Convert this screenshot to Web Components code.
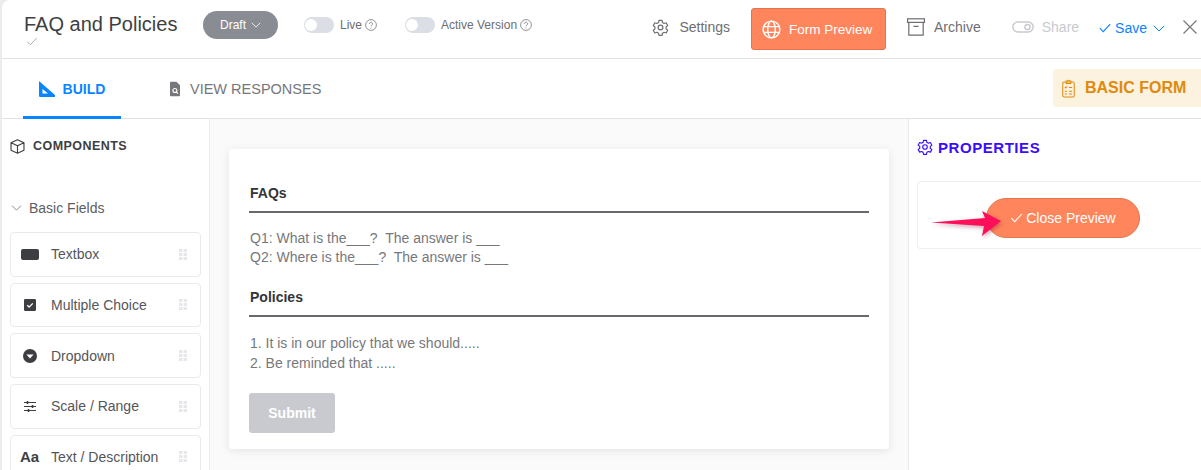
<!DOCTYPE html>
<html><head><meta charset="utf-8"><title>FAQ and Policies</title>
<style>
html,body{margin:0;padding:0;width:1201px;height:470px;overflow:hidden;background:#ececef;font-family:"Liberation Sans",Arial,sans-serif}
</style></head><body>
<form-app></form-app>
<script>
const ICONS={
 check:'<svg width="100%" height="100%" viewBox="0 0 12 10" fill="none" stroke="currentColor" stroke-width="1.1"><path d="M.8 5.2 4.2 8.6 11.2 1.2"/></svg>',
 chev:'<svg width="100%" height="100%" viewBox="0 0 12 7" fill="none" stroke="currentColor" stroke-width="1"><path d="M.8.8 6 6 11.2.8"/></svg>',
 help:'<svg width="100%" height="100%" viewBox="0 0 12 12" fill="none" stroke="currentColor" stroke-width=".8"><circle cx="6" cy="6" r="5.4"/><path d="M4.4 4.8a1.6 1.6 0 1 1 2.4 1.4c-.6.3-.8.6-.8 1.2"/><circle cx="6" cy="9" r=".5" fill="currentColor" stroke="none"/></svg>',
 gear:'<svg width="100%" height="100%" viewBox="0 0 24 24" fill="none" stroke="currentColor" stroke-width="1.7" stroke-linejoin="round"><circle cx="12" cy="12" r="3.4"/><path d="M9.8 2h4.4l.6 3 2.3 1.3 2.9-1 2.2 3.8-2.3 2v2.8l2.3 2-2.2 3.8-2.9-1-2.3 1.3-.6 3H9.8l-.6-3-2.3-1.3-2.9 1-2.2-3.8 2.3-2v-2.8l-2.3-2 2.2-3.8 2.9 1 2.3-1.3z"/></svg>',
 globe:'<svg width="100%" height="100%" viewBox="0 0 20 20" fill="none" stroke="currentColor" stroke-width="1.5"><circle cx="10" cy="10" r="8.8"/><ellipse cx="10" cy="10" rx="4" ry="8.8"/><path d="M1.6 7h16.8M1.6 13h16.8"/></svg>',
 archive:'<svg width="100%" height="100%" viewBox="0 0 18 18" fill="none" stroke="currentColor" stroke-width="1.2"><rect x=".6" y=".8" width="16.8" height="3.6"/><path d="M1.8 4.4V17.2H16.2V4.4M6.5 8.4h5"/></svg>',
 share:'<svg width="100%" height="100%" viewBox="0 0 22 12" fill="none" stroke="currentColor" stroke-width="1.5"><rect x=".8" y="1" width="20.4" height="10" rx="5"/><circle cx="15.5" cy="6" r="2.6"/></svg>',
 build:'<svg width="100%" height="100%" viewBox="0 0 16 16"><path fill="currentColor" fill-rule="evenodd" d="M0 0 16 14v2H1.2A1.2 1.2 0 0 1 0 14.8zM3.5 8v4.6H9z"/></svg>',
 doc:'<svg width="100%" height="100%" viewBox="0 0 11 16"><path fill="currentColor" d="M1 0h6l4 4v11a1 1 0 0 1-1 1H1a1 1 0 0 1-1-1V1a1 1 0 0 1 1-1z"/><circle cx="5.4" cy="9.6" r="2.2" fill="none" stroke="#fff" stroke-width="1.2"/><path d="M7 11.3l1.8 1.8" stroke="#fff" stroke-width="1.2"/></svg>',
 clip:'<svg width="100%" height="100%" viewBox="0 0 14 20" fill="none" stroke="currentColor" stroke-width="1.1"><rect x=".8" y="3" width="12.4" height="16.2" rx="1.6"/><path d="M4.5 3V1.8h1.4a1.2 1.2 0 0 1 2.2 0h1.4V4.6h-5zM3 8.4l1 1 1.6-1.8M7.4 9h3.6M3 13h2.4M7.4 13h3.6M3 16h2.4M7.4 16h3.6"/></svg>',
 cube:'<svg width="100%" height="100%" viewBox="0 0 16 16" fill="none" stroke="currentColor" stroke-width="1.2" stroke-linejoin="round"><path d="M8 .9 14.9 4v8L8 15.1 1.1 12V4zM1.1 4 8 7.2 14.9 4M8 7.2v7.9"/></svg>',
 textbox:'<svg width="100%" height="100%" viewBox="0 0 18 11"><rect width="18" height="11" rx="2" fill="currentColor"/></svg>',
 mc:'<svg width="100%" height="100%" viewBox="0 0 12 12"><rect width="12" height="12" rx="1.2" fill="currentColor"/><path d="M3.2 6.2 5.2 8 8.8 4.4" fill="none" stroke="#fff" stroke-width="1.3"/></svg>',
 dd:'<svg width="100%" height="100%" viewBox="0 0 14 14"><circle cx="7" cy="7" r="7" fill="currentColor"/><path d="M3.4 5.4h7.2L7 9.6z" fill="#fff"/></svg>',
 scale:'<svg width="100%" height="100%" viewBox="0 0 12 11" fill="none" stroke="currentColor" stroke-width="1.2"><path d="M0 1.5h12M0 5.5h12M0 9.5h12"/><path d="M3.5 0v3M8.5 4v3M4.5 8v3" stroke-width="1.6"/></svg>',
 drag:'<svg width="100%" height="100%" viewBox="0 0 8 11" fill="#e6e7ea"><rect width="3.4" height="3"/><rect x="4.6" width="3.4" height="3"/><rect y="4" width="3.4" height="3"/><rect x="4.6" y="4" width="3.4" height="3"/><rect y="8" width="3.4" height="3"/><rect x="4.6" y="8" width="3.4" height="3"/></svg>',
 x:'<svg width="100%" height="100%" viewBox="0 0 14 14" fill="none" stroke="currentColor" stroke-width="1.2"><path d="M.5.5l13 13M13.5.5l-13 13"/></svg>'
};
class Base extends HTMLElement{
 render(html){if(!this.shadowRoot)this.attachShadow({mode:'open'});this.shadowRoot.innerHTML=html}
}
class UiIcon extends Base{
 connectedCallback(){
  const w=this.getAttribute('w')||16,h=this.getAttribute('h')||w;
  this.render(`<style>:host{display:inline-block;width:${w}px;height:${h}px;flex:none;line-height:0}</style>${ICONS[this.getAttribute('name')]||''}`);
 }
}
customElements.define('ui-icon',UiIcon);
class UiToggle extends Base{
 connectedCallback(){
  this.render(`<style>
  :host{display:inline-flex;align-items:center;font-size:12px;color:#6d6e72}
  i{display:block;width:30px;height:16px;border-radius:8px;background:#dcdee5;position:relative;margin-right:6px}
  i::after{content:"";position:absolute;left:1px;top:2px;width:12px;height:12px;border-radius:50%;background:#fff}
  ui-icon{margin-left:3px;color:#77787c}
  </style><i></i><slot></slot><ui-icon name="help" w="12"></ui-icon>`);
 }
}
customElements.define('ui-toggle',UiToggle);
class AppHeader extends Base{
 connectedCallback(){
  this.render(`<style>
  :host{display:flex;align-items:flex-start;height:58px;border-bottom:1px solid #e2e3e8;box-sizing:content-box;position:relative}
  .title{width:178px;padding:13px 0 0 22px;flex:none;color:#3e3f42;font-size:20px;line-height:23px}
  .title ui-icon{display:block;color:#a9aaae;margin:1px 0 0 2px}
  .pill{flex:none;width:75px;height:28px;margin:11px 26px 0 1px;border-radius:14px;background:#8a8c93;color:#fff;font-size:12px;display:flex;align-items:center;justify-content:center;gap:5px}
  .tg{display:flex;margin-top:17px;gap:28px;height:16px;flex:none}
  .acts{margin-left:auto;display:flex;align-items:flex-start;flex:none}
  .a{display:flex;align-items:center;font-size:14px;color:#6d6e72;height:42px;margin-top:6px}
  .btn{width:135px;height:42px;margin:8px 21px 0 21px;box-sizing:border-box;background:#ff855c;border:1px solid #e2744f;border-radius:3px;color:#fff;font-size:13.5px;display:flex;align-items:center;padding-left:10px;gap:8px}
  </style>
  <div class="title">FAQ and Policies<ui-icon name="check" w="12" h="9"></ui-icon></div>
  <div class="pill">Draft <ui-icon name="chev" w="10" h="6"></ui-icon></div>
  <div class="tg"><ui-toggle>Live</ui-toggle><ui-toggle>Active Version</ui-toggle></div>
  <div class="acts">
   <div class="a" style="gap:10px"><ui-icon name="gear" w="17"></ui-icon>Settings</div>
   <div class="btn"><ui-icon name="globe" w="19"></ui-icon>Form Preview</div>
   <div class="a" style="gap:9px"><ui-icon name="archive" w="18"></ui-icon>Archive</div>
   <div class="a" style="gap:8px;margin-left:31px;color:#c8cad0"><ui-icon name="share" w="22" h="12"></ui-icon>Share</div>
   <div class="a" style="margin-left:20px;color:#0a84ff;margin-top:7px"><ui-icon name="check" w="12" h="10"></ui-icon><span style="margin:0 6px 0 4px">Save</span><ui-icon name="chev" w="12" h="7"></ui-icon></div>
   <div class="a" style="margin:6px 4px 0 18px;color:#77787c"><ui-icon name="x" w="14"></ui-icon></div>
  </div>`);
 }
}
customElements.define('app-header',AppHeader);
class AppTabs extends Base{
 connectedCallback(){
  this.render(`<style>
  :host{display:flex;height:59px;border-bottom:1px solid #e2e3e8;position:relative;font-size:14px}
  .t{display:flex;align-items:center;height:59px;box-sizing:border-box;flex:none}
  .on{margin-left:21px;width:98px;justify-content:center;gap:8px;color:#0a84ff;font-weight:bold;border-bottom:3px solid #0a84ff;padding-top:3px;height:60px}
  .off{margin-left:49px;gap:10px;color:#76777b;font-size:14.5px}
  .badge{margin:10px 0 0 auto;width:148px;height:38px;background:#fbf3e0;border-radius:3px 0 0 3px;display:flex;align-items:center;gap:10px;padding-left:9px;box-sizing:border-box;color:#e08a0c;font-weight:bold;font-size:16px}
  </style>
  <div class="t on"><ui-icon name="build" w="16"></ui-icon>BUILD</div>
  <div class="t off"><ui-icon name="doc" w="10" h="16"></ui-icon>VIEW RESPONSES</div>
  <div class="badge"><ui-icon name="clip" w="13" h="19"></ui-icon>BASIC FORM</div>`);
 }
}
customElements.define('app-tabs',AppTabs);
class FieldCard extends Base{
 connectedCallback(){
  const n=this.getAttribute('icon'),w=this.getAttribute('w'),h=this.getAttribute('h');
  const ic=n==='aa'?`<span class="aa">Aa</span>`:`<ui-icon name="${n}" w="${w}" h="${h}"></ui-icon>`;
  this.render(`<style>
  :host{display:flex;align-items:center;height:44.67px;flex:none;box-sizing:border-box;border:1px solid #e9eaee;border-radius:4px;color:#55565a;font-size:14px}
  .i{width:39px;margin-left:1px;display:flex;justify-content:center;flex:none;color:#3d3e42;box-sizing:border-box;padding-right:4px;margin-right:0}
  .aa{font-size:15px;font-weight:bold;color:#3d3e42;line-height:15px}
  .l{flex:1}
  ui-icon.d{margin-right:13px}
  </style><span class="i">${ic}</span><span class="l"><slot></slot></span><ui-icon class="d" name="drag" w="8" h="11"></ui-icon>`);
 }
}
customElements.define('field-card',FieldCard);
class LeftPane extends Base{
 connectedCallback(){
  this.render(`<style>
  :host{display:flex;flex-direction:column;width:207px;flex:none;box-sizing:content-box;border-right:1px solid #e9eaee;background:#fff;padding:0 8px 0 8px;width:191px;margin-left:0;overflow:hidden}
  .h{display:flex;align-items:center;gap:8px;height:14px;margin-top:20px;font-weight:bold;font-size:12.5px;letter-spacing:.45px;color:#3d3e42}
  .s{display:flex;align-items:center;gap:7px;margin:47px 0 16px 1px;font-size:14px;color:#5d5e62;height:16px;line-height:16px}
  .s ui-icon{color:#77787c}
  .list{display:flex;flex-direction:column;gap:6px}
  </style>
  <div class="h"><ui-icon name="cube" w="15" style="color:#3d3e42"></ui-icon>COMPONENTS</div>
  <div class="s"><ui-icon name="chev" w="11" h="6"></ui-icon>Basic Fields</div>
  <div class="list">
   <field-card icon="textbox" w="18" h="11">Textbox</field-card>
   <field-card icon="mc" w="12" h="12">Multiple Choice</field-card>
   <field-card icon="dd" w="14" h="14">Dropdown</field-card>
   <field-card icon="scale" w="12" h="11">Scale / Range</field-card>
   <field-card icon="aa">Text / Description</field-card>
  </div>`);
 }
}
customElements.define('left-pane',LeftPane);
class FormCard extends Base{
 connectedCallback(){
  this.render(`<style>
  :host{display:block;width:660px;height:300px;margin:30px 0 0 19px;background:#fff;border-radius:3px;box-shadow:0 2px 10px rgba(0,0,0,.09);box-sizing:border-box;padding:36px 20px 0 21px;color:#77787c;font-size:14px}
  h4{margin:0;font-size:14px;line-height:16px;font-weight:bold;color:#333438}
  hr{margin:10px 0 0 -1px;height:2px;border:0;background:#68696c}
  p{margin:0}
  .q{margin-top:16px;line-height:19px}
  .p{margin-top:16px;line-height:20px}
  h4.b{margin-top:22px}
  .sub{margin:20px 0 0 -1px;width:86px;height:40px;border-radius:3px;background:#c8cad0;color:#fff;font-size:14px;font-weight:bold;display:flex;align-items:center;justify-content:center}
  </style>
  <h4>FAQs</h4><hr>
  <p class="q" style="white-space:pre">Q1: What is the___?  The answer is ___
Q2: Where is the___?  The answer is ___</p>
  <h4 class="b">Policies</h4><hr>
  <p class="p" style="white-space:pre">1. It is in our policy that we should.....
2. Be reminded that .....</p>
  <div class="sub">Submit</div>`);
 }
}
customElements.define('form-card',FormCard);
class RightPane extends Base{
 connectedCallback(){
  this.render(`<style>
  :host{display:block;flex:1;border-left:1px solid #e9eaee;background:#fff;padding:19px 0 0 8px;min-width:0}
  .h{display:flex;align-items:center;gap:5px;height:18px;color:#3a0cff;font-weight:bold;font-size:15px;letter-spacing:.55px}
  .c{margin-top:25px;height:68px;box-sizing:border-box;border:1px solid #eeeff2;border-right:0;border-radius:4px 0 0 4px;padding:16px 0 0 68px;position:relative}
  .b{width:154px;height:40px;box-sizing:border-box;border-radius:20px;background:#ff855c;border:1px solid #e2744f;color:#fff;font-size:14px;display:flex;align-items:center;justify-content:center;gap:3px}
  svg.arrow{position:absolute;left:13px;top:28px;overflow:visible;filter:drop-shadow(1px 2px 2px rgba(120,0,40,.35))}
  </style>
  <div class="h"><ui-icon name="gear" w="16"></ui-icon>PROPERTIES</div>
  <div class="c"><div class="b"><ui-icon name="check" w="13" h="10"></ui-icon>Close Preview</div>
  <svg class="arrow" width="70" height="26" viewBox="0 0 70 26"><path fill="#ff0f5a" d="M0 12.5 54 8 51 1 70 11 51 26 53 16z"/></svg></div>`);
 }
}
customElements.define('right-pane',RightPane);
class FormApp extends Base{
 connectedCallback(){
  this.render(`<style>
  :host{display:flex;flex-direction:column;width:1199px;height:470px;margin-left:2px;background:#fff;border-top-left-radius:8px;overflow:hidden}
  .m{display:flex;flex:1;min-height:0}
  .c{flex:none;width:698px;background:#fafafa}
  </style>
  <app-header></app-header><app-tabs></app-tabs>
  <div class="m"><left-pane></left-pane><div class="c"><form-card></form-card></div><right-pane></right-pane></div>`);
 }
}
customElements.define('form-app',FormApp);
</script>
</body></html>
